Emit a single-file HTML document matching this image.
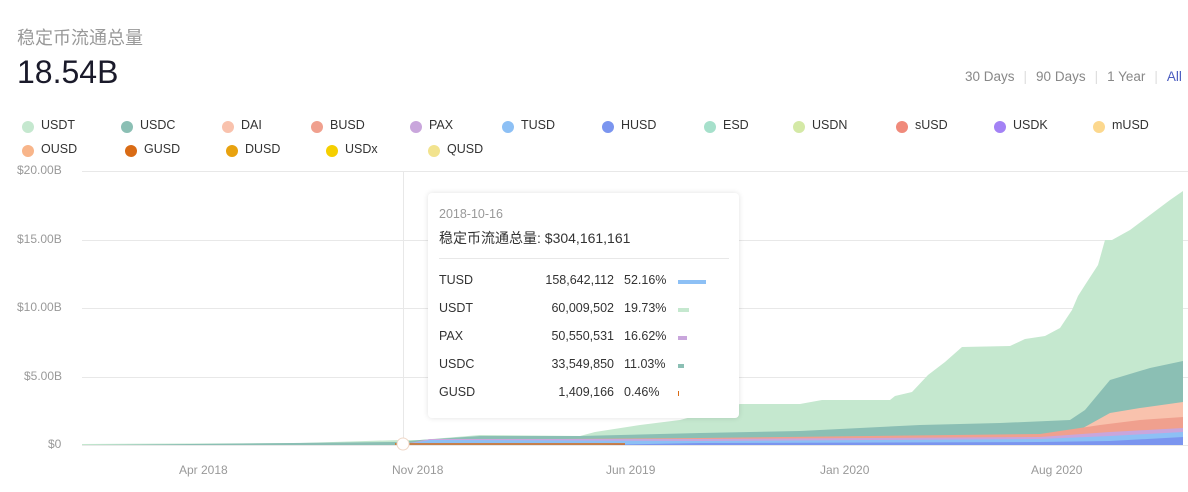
<!DOCTYPE html>
<html><head><meta charset="utf-8"><style>
*{margin:0;padding:0;box-sizing:border-box}
body{width:1188px;height:492px;background:#fff;font-family:"Liberation Sans","Noto Sans CJK SC",sans-serif;position:relative;overflow:hidden;color:#333}
.t{position:absolute;white-space:nowrap}
.lg{position:absolute;font-size:12.5px;color:#333;white-space:nowrap}
.lg i{position:absolute;left:-19px;top:3px;width:12px;height:12px;border-radius:50%}
.ax{position:absolute;font-size:12px;color:#999;white-space:nowrap}
.tip{position:absolute;left:428px;top:193px;width:311px;height:225px;background:#fff;border-radius:4px;box-shadow:0 0 6px rgba(0,0,0,.12)}
.row{position:absolute;left:11px;font-size:12.5px;color:#333;width:300px;height:16px}
.row span{position:absolute;top:0}
</style></head><body>
<div class="t" style="left:17px;top:24px;font-size:18px;color:#999">稳定币流通总量</div>
<div class="t" style="left:17px;top:54px;font-size:32px;color:#1a1a2a">18.54B</div>
<div class="t" style="left:965px;top:69px;font-size:13.5px;color:#888">30 Days<span style="color:#ddd;margin:0 9px">|</span>90 Days<span style="color:#ddd;margin:0 9px">|</span>1 Year<span style="color:#ddd;margin:0 9px">|</span><span style="color:#4a5cc0">All</span></div>

<div class="lg" style="left:41px;top:118px"><i style="background:#c5e8cf"></i>USDT</div>
<div class="lg" style="left:140px;top:118px"><i style="background:#8bbfb4"></i>USDC</div>
<div class="lg" style="left:241px;top:118px"><i style="background:#f9c2ad"></i>DAI</div>
<div class="lg" style="left:330px;top:118px"><i style="background:#f0a08e"></i>BUSD</div>
<div class="lg" style="left:429px;top:118px"><i style="background:#c9a6dc"></i>PAX</div>
<div class="lg" style="left:521px;top:118px"><i style="background:#8dc0f5"></i>TUSD</div>
<div class="lg" style="left:621px;top:118px"><i style="background:#7b95ef"></i>HUSD</div>
<div class="lg" style="left:723px;top:118px"><i style="background:#a6e0cb"></i>ESD</div>
<div class="lg" style="left:812px;top:118px"><i style="background:#d4e9a6"></i>USDN</div>
<div class="lg" style="left:915px;top:118px"><i style="background:#f08a7b"></i>sUSD</div>
<div class="lg" style="left:1013px;top:118px"><i style="background:#a382f5"></i>USDK</div>
<div class="lg" style="left:1112px;top:118px"><i style="background:#fcd88e"></i>mUSD</div>
<div class="lg" style="left:41px;top:142px"><i style="background:#f8b58a"></i>OUSD</div>
<div class="lg" style="left:144px;top:142px"><i style="background:#d96b15"></i>GUSD</div>
<div class="lg" style="left:245px;top:142px"><i style="background:#e8a20f"></i>DUSD</div>
<div class="lg" style="left:345px;top:142px"><i style="background:#f5cf00"></i>USDx</div>
<div class="lg" style="left:447px;top:142px"><i style="background:#f2e38e"></i>QUSD</div>

<div class="ax" style="left:17px;top:163px">$20.00B</div>
<div class="ax" style="left:17px;top:232px">$15.00B</div>
<div class="ax" style="left:17px;top:300px">$10.00B</div>
<div class="ax" style="left:24px;top:369px">$5.00B</div>
<div class="ax" style="left:48px;top:437px">$0</div>
<div class="ax" style="left:179px;top:463px">Apr 2018</div>
<div class="ax" style="left:392px;top:463px">Nov 2018</div>
<div class="ax" style="left:606px;top:463px">Jun 2019</div>
<div class="ax" style="left:820px;top:463px">Jan 2020</div>
<div class="ax" style="left:1031px;top:463px">Aug 2020</div>

<svg width="1188" height="492" style="position:absolute;left:0;top:0">
<g stroke="#e8e8e8" stroke-width="1">
<line x1="82" y1="171.5" x2="1188" y2="171.5"/><line x1="82" y1="240.5" x2="1188" y2="240.5"/><line x1="82" y1="308.5" x2="1188" y2="308.5"/><line x1="82" y1="377.5" x2="1188" y2="377.5"/><line x1="82" y1="445.5" x2="1188" y2="445.5"/>
<line x1="403.5" y1="171" x2="403.5" y2="445"/>
</g>
<path fill="#c5e8cf" d="M82,445 L82,444 L300,443 L400,440 L420,440 L480,435 L580,436 L595,432 L640,425 L680,420 L740,404 L800,404 L822,400 L890,400 L895,396 L912,392 L928,375 L945,362 L962,347 L1010,346 L1025,339 L1045,336 L1060,328 L1072,310 L1078,296 L1085,285 L1098,265 L1105,240 L1112,240 L1130,230 L1150,215 L1170,200 L1183,191 L1183,445 Z"/>
<path fill="#8bbfb4" d="M82,445 L400,442 L420,440 L480,436 L580,436 L700,433 L800,431 L920,425 L1000,423 L1070,420 L1085,410 L1110,380 L1150,368 L1183,361 L1183,445 Z"/>
<path fill="#f9c2ad" d="M1083,445 L1083,428 L1110,413 L1140,408 L1183,402 L1183,445 Z"/>
<path fill="#f0a08e" d="M400,445 L430,440 L700,438 L1040,434 L1100,425 L1140,420 L1183,417 L1183,445 Z"/>
<path fill="#c9a6dc" d="M400,445 L430,439 L700,439 L1040,437 L1110,432 L1183,428 L1183,445 Z"/>
<path fill="#8dc0f5" d="M400,445 L430,440 L700,441 L1040,439 L1110,436 L1183,432 L1183,445 Z"/>
<path fill="#7b95ef" d="M600,445 L700,443 L1040,442 L1110,441 L1183,437 L1183,445 Z"/>
<path fill="none" stroke="#d96b15" stroke-width="1.5" d="M395,444 L625,444"/>
<circle cx="403" cy="444" r="6" fill="#fff" stroke="#f0d8c8" stroke-width="1"/>
</svg>

<div class="tip">
<div class="t" style="left:11px;top:14px;font-size:12.5px;color:#999">2018-10-16</div>
<div class="t" style="left:11px;top:35px;font-size:14px;color:#333">稳定币流通总量: $304,161,161</div>
<div style="position:absolute;left:11px;right:10px;top:65px;height:1px;background:#e8e8e8"></div>
<div class="row" style="top:80px"><span style="left:0">TUSD</span><span style="right:125px">158,642,112</span><span style="left:185px">52.16%</span><span style="left:239px;top:7px;width:28px;height:4px;background:#8dc0f5"></span></div>
<div class="row" style="top:108px"><span style="left:0">USDT</span><span style="right:125px">60,009,502</span><span style="left:185px">19.73%</span><span style="left:239px;top:7px;width:11px;height:4px;background:#c5e8cf"></span></div>
<div class="row" style="top:136px"><span style="left:0">PAX</span><span style="right:125px">50,550,531</span><span style="left:185px">16.62%</span><span style="left:239px;top:7px;width:9px;height:4px;background:#c9a6dc"></span></div>
<div class="row" style="top:164px"><span style="left:0">USDC</span><span style="right:125px">33,549,850</span><span style="left:185px">11.03%</span><span style="left:239px;top:7px;width:6px;height:4px;background:#8bbfb4"></span></div>
<div class="row" style="top:192px"><span style="left:0">GUSD</span><span style="right:125px">1,409,166</span><span style="left:185px">0.46%</span><span style="left:239px;top:6px;width:1px;height:5px;background:#d96b15"></span></div>
</div>
</body></html>
